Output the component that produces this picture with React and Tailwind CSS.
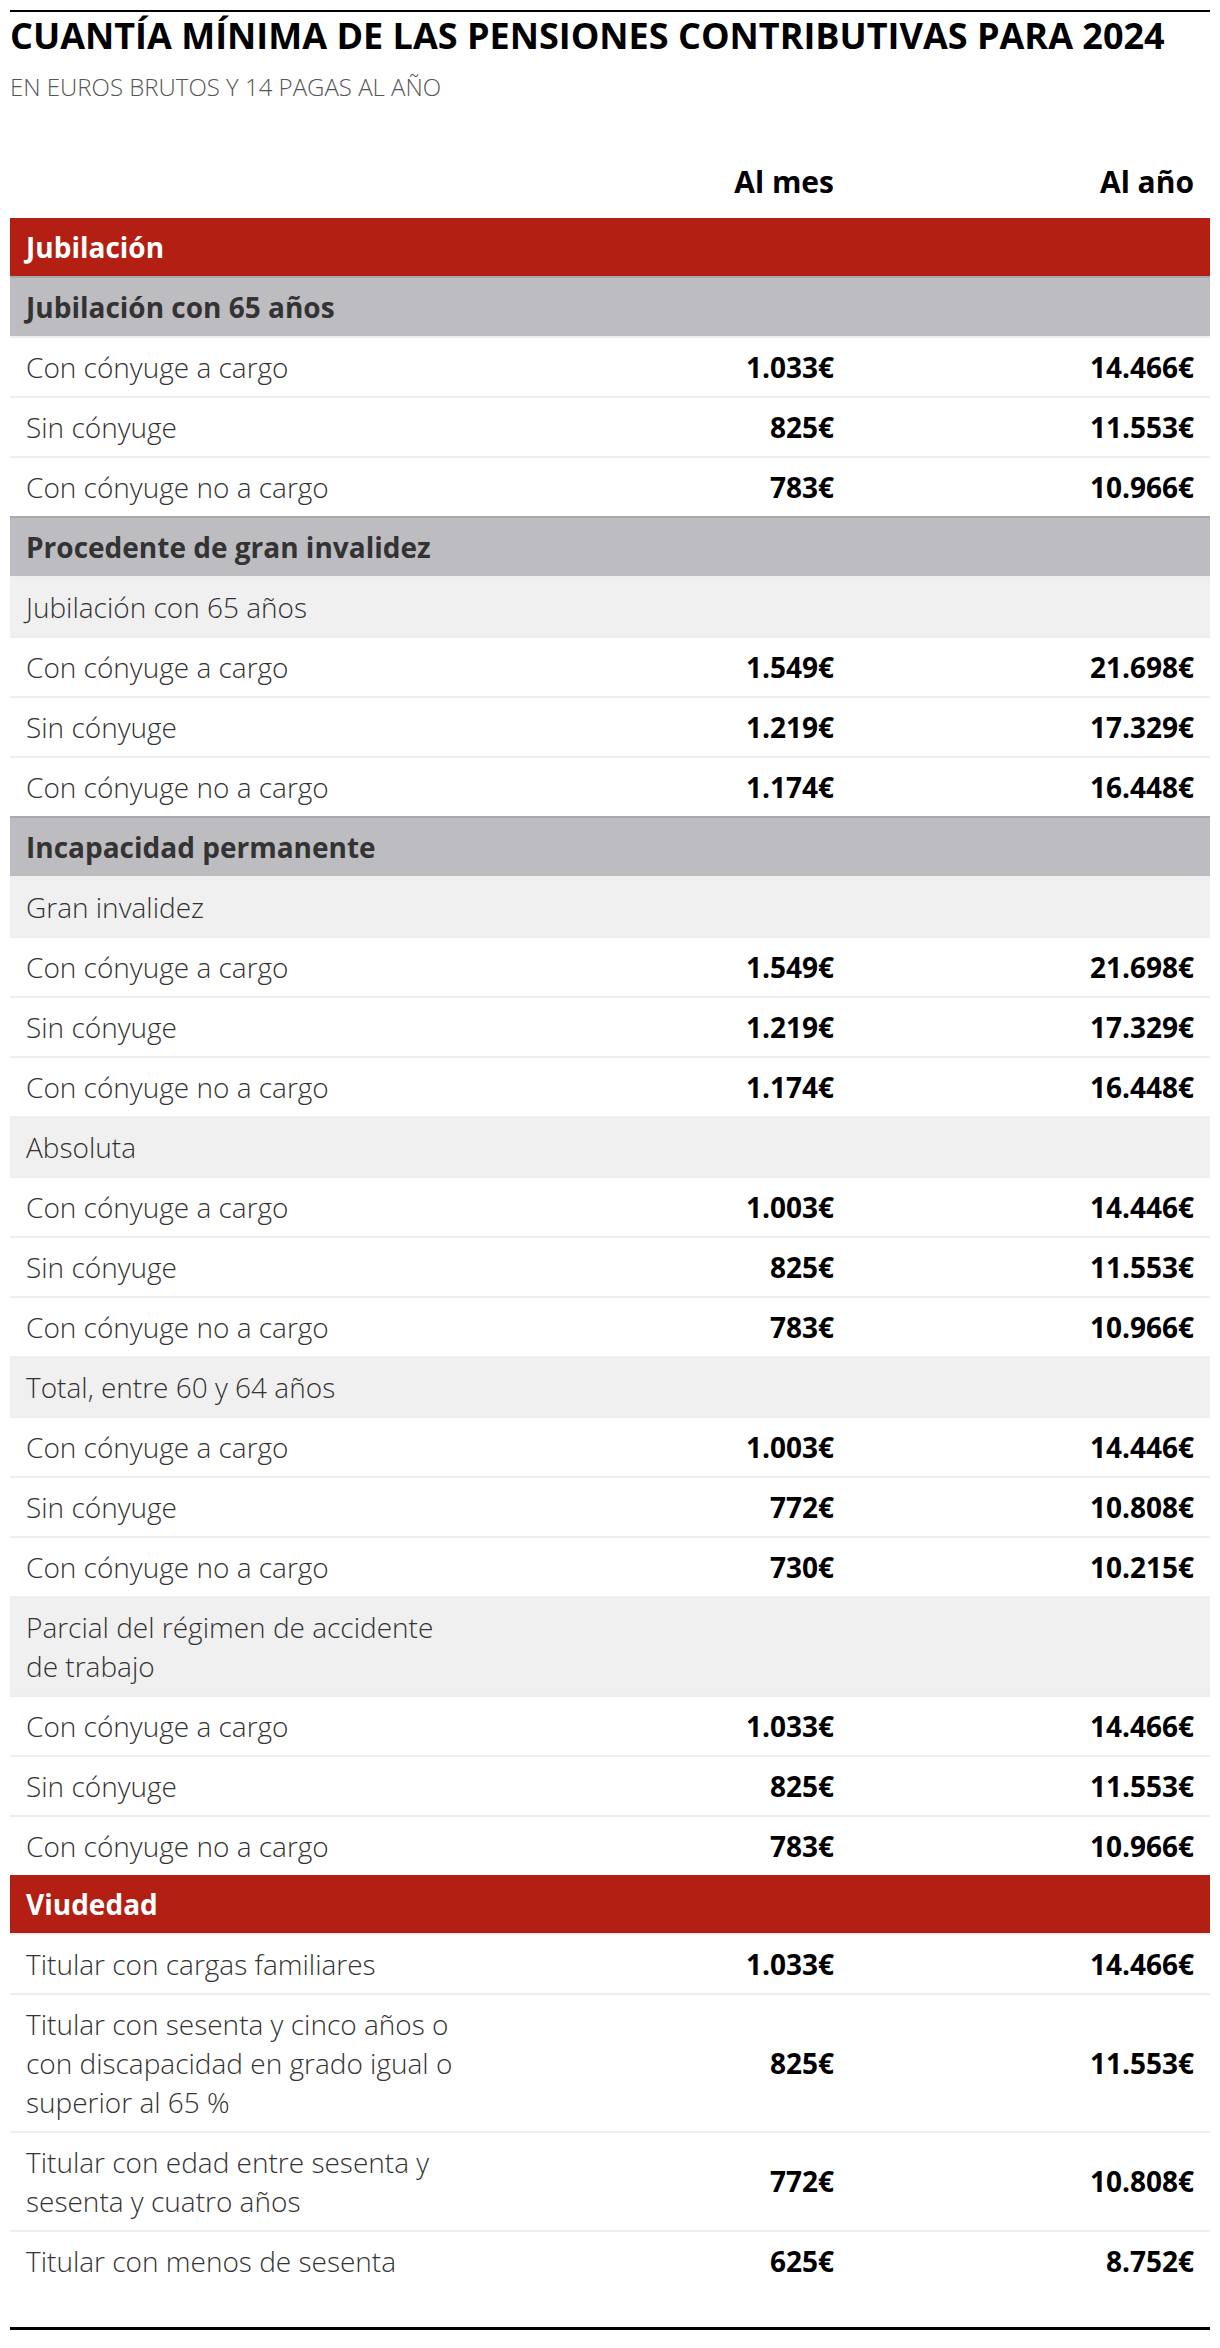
import React from "react";

const rows = [
  { t: "red", l: "Jubilación" },
  { t: "sub", l: "Jubilación con 65 años" },
  { t: "d", l: "Con cónyuge a cargo", m: "1.033€", y: "14.466€" },
  { t: "d", l: "Sin cónyuge", m: "825€", y: "11.553€" },
  { t: "d", l: "Con cónyuge no a cargo", m: "783€", y: "10.966€" },
  { t: "sub", l: "Procedente de gran invalidez" },
  { t: "lt", l: "Jubilación con 65 años" },
  { t: "d", l: "Con cónyuge a cargo", m: "1.549€", y: "21.698€" },
  { t: "d", l: "Sin cónyuge", m: "1.219€", y: "17.329€" },
  { t: "d", l: "Con cónyuge no a cargo", m: "1.174€", y: "16.448€" },
  { t: "sub", l: "Incapacidad permanente" },
  { t: "lt", l: "Gran invalidez" },
  { t: "d", l: "Con cónyuge a cargo", m: "1.549€", y: "21.698€" },
  { t: "d", l: "Sin cónyuge", m: "1.219€", y: "17.329€" },
  { t: "d", l: "Con cónyuge no a cargo", m: "1.174€", y: "16.448€" },
  { t: "lt", l: "Absoluta" },
  { t: "d", l: "Con cónyuge a cargo", m: "1.003€", y: "14.446€" },
  { t: "d", l: "Sin cónyuge", m: "825€", y: "11.553€" },
  { t: "d", l: "Con cónyuge no a cargo", m: "783€", y: "10.966€" },
  { t: "lt", l: "Total, entre 60 y 64 años" },
  { t: "d", l: "Con cónyuge a cargo", m: "1.003€", y: "14.446€" },
  { t: "d", l: "Sin cónyuge", m: "772€", y: "10.808€" },
  { t: "d", l: "Con cónyuge no a cargo", m: "730€", y: "10.215€" },
  { t: "lt", l: "Parcial del régimen de accidente de trabajo" },
  { t: "d", l: "Con cónyuge a cargo", m: "1.033€", y: "14.466€" },
  { t: "d", l: "Sin cónyuge", m: "825€", y: "11.553€" },
  { t: "d", l: "Con cónyuge no a cargo", m: "783€", y: "10.966€" },
  { t: "red", l: "Viudedad" },
  { t: "d", l: "Titular con cargas familiares", m: "1.033€", y: "14.466€" },
  { t: "d", l: "Titular con sesenta y cinco años o con discapacidad en grado igual o superior al 65 %", m: "825€", y: "11.553€" },
  { t: "d", l: "Titular con edad entre sesenta y sesenta y cuatro años", m: "772€", y: "10.808€" },
  { t: "d", l: "Titular con menos de sesenta", m: "625€", y: "8.752€" },
];

function Row({ r }) {
  if (r.t === "red") {
    return (
      <div className="bg-[#b41f13] px-4 pt-[10px] pb-[9px]">
        <span className="text-white font-bold text-[28px] leading-[39px]">{r.l}</span>
      </div>
    );
  }
  if (r.t === "sub") {
    return (
      <div className="bg-[#bdbcc1] px-4 pt-[10px] pb-[9px] border-t-2 border-[#a9a8ad]">
        <span className="text-[#333333] font-bold text-[28px] leading-[39px]">{r.l}</span>
      </div>
    );
  }
  if (r.t === "lt") {
    return (
      <div className="grid grid-cols-[480px_360px_360px] bg-[#f0f0f0] border-t-2 border-[#eeeeee]">
        <div className="pl-4 pr-[30px] pt-[10px] pb-[9px] text-[#333333] font-light text-[28px] leading-[39px]">{r.l}</div>
        <div />
        <div />
      </div>
    );
  }
  return (
    <div className="grid grid-cols-[480px_360px_360px] items-center bg-white border-t-2 border-[#eeeeee]">
      <div className="pl-4 pr-[30px] pt-[10px] pb-[9px] text-[#333333] font-light text-[28px] leading-[39px]">{r.l}</div>
      <div className="px-4 text-right text-black font-bold text-[28px] leading-[39px]">{r.m}</div>
      <div className="px-4 text-right text-black font-bold text-[28px] leading-[39px]">{r.y}</div>
    </div>
  );
}

export default function App() {
  return (
    <div
      className="w-[1220px] h-[2348px] bg-white pt-[10px] px-[10px]"
      style={{ fontFamily: '"Open Sans", "Noto Sans", sans-serif' }}
    >
      <div className="border-t-2 border-black" />
      <h1 className="mt-[6px] text-[36px] leading-[36px] font-bold text-black">
        CUANTÍA MÍNIMA DE LAS PENSIONES CONTRIBUTIVAS PARA 2024
      </h1>
      <p className="mt-[19px] text-[24px] leading-[28px] font-light text-[#555555]">
        EN EUROS BRUTOS Y 14 PAGAS AL AÑO
      </p>
      <div className="mt-[51px] grid grid-cols-[480px_360px_360px] pt-[10px] pb-[17px]">
        <div />
        <div className="px-4 text-right font-bold text-[30px] leading-[39px] text-black">Al mes</div>
        <div className="px-4 text-right font-bold text-[30px] leading-[39px] text-black">Al año</div>
      </div>
      <div>
        {rows.map((r, i) => (
          <Row key={i} r={r} />
        ))}
      </div>
      <div className="mt-[37px] border-t-[3px] border-black" />
    </div>
  );
}
